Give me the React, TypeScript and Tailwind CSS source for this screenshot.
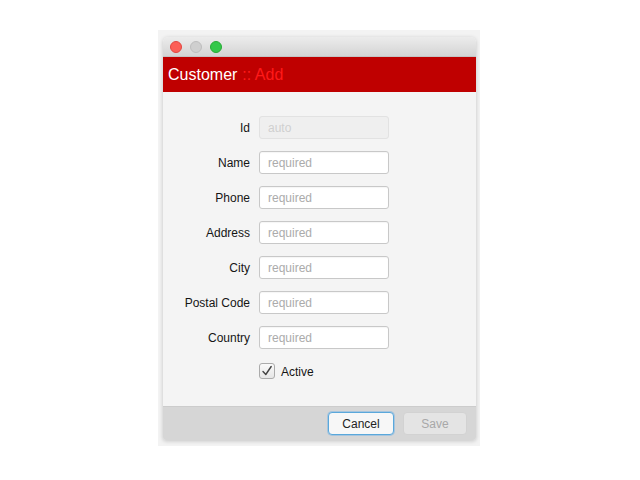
import React from "react";

const font = { fontFamily: '"Liberation Sans", Arial, sans-serif' };

function Row({ label, placeholder, disabled }: { label: string; placeholder: string; disabled?: boolean }) {
  return (
    <div className="flex items-center h-[23px]">
      <div className="w-[87px] text-right text-[12px] text-[#151515] pt-[1px]">{label}</div>
      <div
        className={
          "ml-[9px] w-[130px] h-[23px] rounded-[3px] border flex items-center px-[8px] pt-[1px] text-[12px] " +
          (disabled
            ? "bg-[#efefef] border-[#e2e2e2] text-[#cfcfcf]"
            : "bg-white border-[#c8c8c8] text-[#ababab] shadow-[inset_0_1px_1px_rgba(0,0,0,0.04)]")
        }
      >
        {placeholder}
      </div>
    </div>
  );
}

export default function App() {
  return (
    <div className="w-[640px] h-[480px] bg-white pt-[30px] pl-[158px]" style={font}>
      <div className="w-[322px] h-[416px] bg-[#f3f3f3] pt-[7px] pl-[5px]">
        <div className="w-[313px] h-[403px] flex flex-col rounded-t-[5px] rounded-b-[3px] shadow-[0_1px_4px_rgba(0,0,0,0.2)] overflow-hidden">
          <div className="h-[20px] bg-gradient-to-b from-[#ececec] to-[#d4d4d4] flex items-center pl-[7px] gap-[8px] border-b border-[#c4c4c4]">
            <div className="w-[12px] h-[12px] rounded-full bg-[#fc5f57] border border-[#e2463f]" />
            <div className="w-[12px] h-[12px] rounded-full bg-[#cfcfcf] border border-[#bdbdbd]" />
            <div className="w-[12px] h-[12px] rounded-full bg-[#34c84a] border border-[#27aa35]" />
          </div>
          <div className="h-[35px] bg-[#bf0000] flex items-center pl-[5px] pt-[1px] text-[16px]">
            <span className="text-white">Customer</span>
            <span className="text-[#ff1a1a] ml-[5px]">:: Add</span>
          </div>
          <div className="flex-1 bg-[#f4f4f4] flex flex-col pt-[24px] gap-[12px]">
            <Row label="Id" placeholder="auto" disabled />
            <Row label="Name" placeholder="required" />
            <Row label="Phone" placeholder="required" />
            <Row label="Address" placeholder="required" />
            <Row label="City" placeholder="required" />
            <Row label="Postal Code" placeholder="required" />
            <Row label="Country" placeholder="required" />
            <div className="flex items-center ml-[96px] mt-[2px] h-[16px]">
              <div className="w-[16px] h-[16px] rounded-[3px] border border-[#ababab] bg-gradient-to-b from-[#fafafa] to-[#e6e6e6] flex items-center justify-center">
                <svg width="12" height="12" viewBox="0 0 12 12">
                  <path d="M2 6.5 L4.8 9.5 L10.2 1.5" fill="none" stroke="#444" strokeWidth="1.4" strokeLinecap="round" strokeLinejoin="round" />
                </svg>
              </div>
              <span className="ml-[6px] text-[12px] text-[#151515] pt-[1px]">Active</span>
            </div>
          </div>
          <div className="h-[34px] bg-[#d6d6d6] flex items-center justify-end pr-[9px] gap-[9px] border-t border-[#cccccc]">
            <div className="w-[66px] h-[23px] rounded-[4px] bg-[#f7f7f7] border border-[#5aa8db] shadow-[0_0_0_1px_rgba(120,180,230,0.5)] flex items-center justify-center text-[12px] text-[#222]">
              Cancel
            </div>
            <div className="w-[64px] h-[23px] rounded-[4px] bg-[#e4e4e4] border border-[#d2d2d2] flex items-center justify-center text-[12px] text-[#a8a8a8]">
              Save
            </div>
          </div>
        </div>
      </div>
    </div>
  );
}
